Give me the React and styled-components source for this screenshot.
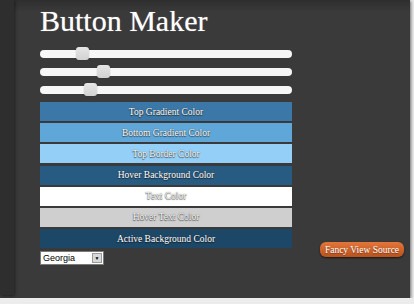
import styled, { createGlobalStyle } from 'styled-components'

const GlobalStyle = createGlobalStyle`
    html, body {
        margin: 0;
        padding: 0;
        background: #ececec;
    }
`

const sliders = [14.3, 22.6, 17.5]

const colors = [
    { label: 'Top Gradient Color', bg: '#3b78a7' },
    { label: 'Bottom Gradient Color', bg: '#5ea7d8' },
    { label: 'Top Border Color', bg: '#93cff6' },
    { label: 'Hover Background Color', bg: '#285b82' },
    { label: 'Text Color', bg: '#ffffff' },
    { label: 'Hover Text Color', bg: '#cfcfcf' },
    { label: 'Active Background Color', bg: '#1c4767' },
]

export default function App() {
    return (
        <>
            <GlobalStyle />
            <Frame>
                <SideStrip />
                <Panel>
                    <Column>
                        <Title>Button Maker</Title>
                        <Sliders>
                            {sliders.map((pos, i) => (
                                <SliderRow key={i}>
                                    <Track>
                                        <Thumb $pos={pos} />
                                    </Track>
                                </SliderRow>
                            ))}
                        </Sliders>
                        <Bars>
                            {colors.map((c) => (
                                <ColorBar key={c.label} $bg={c.bg}>
                                    {c.label}
                                </ColorBar>
                            ))}
                        </Bars>
                        <FontSelect>
                            <SelectText>Georgia</SelectText>
                            <SelectArrow>▼</SelectArrow>
                        </FontSelect>
                    </Column>
                    <Aside>
                        <FancyButton>Fancy View Source</FancyButton>
                    </Aside>
                </Panel>
            </Frame>
        </>
    )
}

const Frame = styled.div`
    width: 410px;
    height: 298px;
    display: flex;
    align-items: flex-start;
    background: linear-gradient(to bottom, #2e2e2e 0, #3a3a3a 12px, #3a3a3a 100%);
    box-shadow: 1px 1px 3px rgba(0, 0, 0, 0.55);
`

const SideStrip = styled.div`
    width: 14px;
    height: 295px;
    flex-shrink: 0;
    background: #2e2e2e;
    box-shadow: 1px 1px 3px rgba(0, 0, 0, 0.45);
`

const Panel = styled.div`
    flex: 1;
    display: flex;
    padding: 6px 0 0 26px;
`

const Column = styled.div`
    width: 252px;
    display: flex;
    flex-direction: column;
`

const Title = styled.h1`
    margin: 0;
    height: 30px;
    font-family: 'Liberation Serif', Georgia, serif;
    font-weight: normal;
    font-size: 30px;
    line-height: 30px;
    color: #ffffff;
    white-space: nowrap;
    text-shadow: 0 0 1px rgba(255, 255, 255, 0.5);
`

const Sliders = styled.div`
    padding-top: 9px;
    display: flex;
    flex-direction: column;
`

const SliderRow = styled.div`
    height: 18px;
    display: flex;
    align-items: center;
`

const Track = styled.div`
    position: relative;
    width: 100%;
    height: 8px;
    border-radius: 4px;
    background: #f7f7f7;
`

const Thumb = styled.div`
    position: absolute;
    top: -3px;
    left: ${({ $pos }) => $pos}%;
    width: 13px;
    height: 13px;
    border-radius: 3px;
    background: linear-gradient(to bottom, #e6e6e6, #d2d2d2);
    box-shadow: 0 0 1px rgba(0, 0, 0, 0.4);
`

const Bars = styled.div`
    margin-top: 3px;
    display: flex;
    flex-direction: column;
    gap: 2.2px;
`

const ColorBar = styled.div`
    height: 19px;
    display: flex;
    align-items: center;
    justify-content: center;
    background: ${({ $bg }) => $bg};
    font-family: 'Liberation Serif', Georgia, serif;
    font-size: 9.5px;
    color: #ffffff;
    text-shadow: 0 0 1px #333, 0 1px 1px rgba(0, 0, 0, 0.6);
`

const FontSelect = styled.div`
    margin-top: 3px;
    width: 64px;
    height: 14px;
    box-sizing: border-box;
    display: flex;
    align-items: stretch;
    background: #ffffff;
    border: 1px solid #7a7a7a;
`

const SelectText = styled.span`
    flex: 1;
    padding-left: 2px;
    font-family: 'Liberation Sans', Arial, sans-serif;
    font-size: 9px;
    line-height: 12px;
    color: #000000;
`

const SelectArrow = styled.span`
    width: 10px;
    margin: 1px;
    display: flex;
    align-items: center;
    justify-content: center;
    background: #d8d8d8;
    border: 1px solid #9a9a9a;
    box-sizing: border-box;
    font-size: 5px;
    color: #000000;
`

const Aside = styled.div`
    flex: 1;
    padding: 236px 0 0 28px;
`

const FancyButton = styled.div`
    width: 84px;
    height: 15px;
    display: flex;
    align-items: center;
    justify-content: center;
    border-radius: 6px;
    background: linear-gradient(to bottom, #e3763a, #b9511d);
    box-shadow: 0 1px 2px rgba(0, 0, 0, 0.6);
    font-family: 'Liberation Serif', Georgia, serif;
    font-size: 9.5px;
    color: #ffffff;
    white-space: nowrap;
    text-shadow: 0 1px 1px rgba(0, 0, 0, 0.4);
`
